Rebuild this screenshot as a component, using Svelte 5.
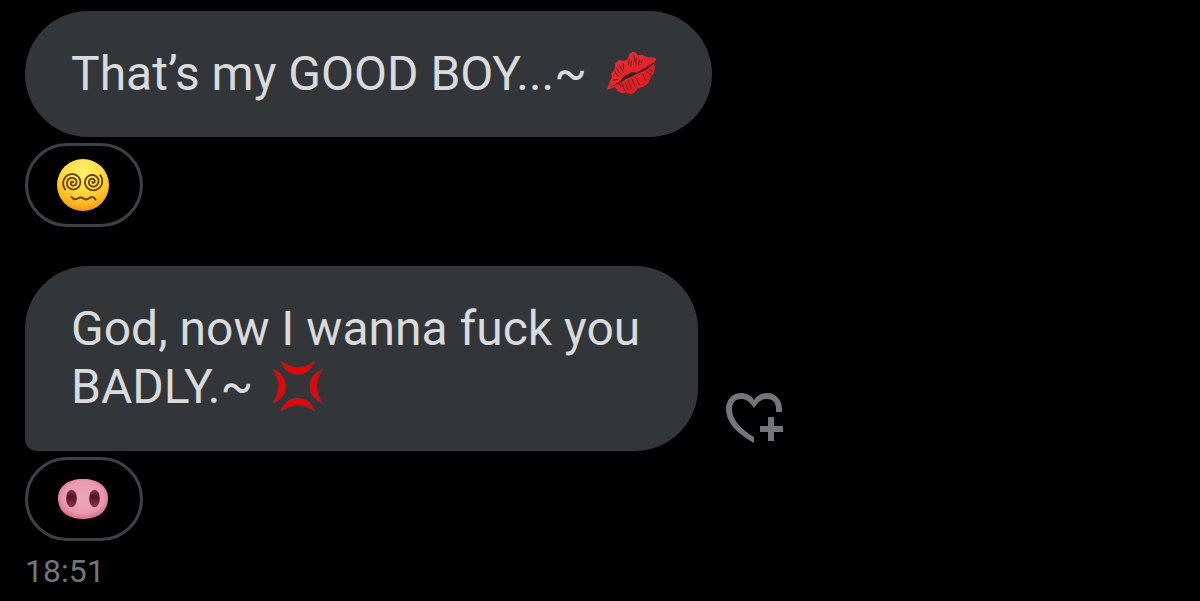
<script>
  const messages = [
    {
      text: "That’s my GOOD BOY...~",
      emoji: "kiss",
      reaction: "dizzy"
    },
    {
      text: "God, now I wanna fuck you\nBADLY.~",
      emoji: "anger",
      reaction: "pig",
      last: true
    }
  ];

  const time = "18:51";

  // spiral around cx, cy that grows from the middle outwards
  const spiral = (cx, cy, radius, turns, start) => {
    const steps = 60;
    const points = Array.from({ length: steps + 1 }, (_, i) => {
      const r = 0.5 + ((radius - 0.5) * i) / steps;
      const a = start - (turns * 2 * Math.PI * i) / steps;
      return `${(cx + r * Math.cos(a)).toFixed(1)} ${(cy + r * Math.sin(a)).toFixed(1)}`;
    });
    return "M" + points.join("L");
  };
</script>

{#snippet kiss()}
  <svg class="emoji" viewBox="24 18 156 156" role="img" aria-label="Kiss mark">
    <defs>
      <linearGradient id="lip" x1="0" y1="0" x2="1" y2="1">
        <stop offset="0" stop-color="#ea3038" />
        <stop offset="1" stop-color="#e0161d" />
      </linearGradient>
    </defs>
    <path
      fill="url(#lip)"
      d="M26 146L35 124L42 108L40 97L50 86L52 66L63 57L78 60L89 55L94 38L105 32L114 35L119 43L132 41L146 48L173 50L174 58L166 69L171 77L168 95L158 109L151 127L135 137L120 142L109 155L96 160L85 155L70 157L58 149L51 138L38 143Z"
    />
    <path
      fill="#32251f"
      d="M32 139Q52 132 67 121Q78 101 92 99L102 93L116 95Q139 84 172 61Q156 84 128 94L111 101L97 109L83 114Q61 133 32 139Z"
    />
    <path
      class="crease"
      d="M49 91L61 107M54 80L70 101M63 71L76 94M75 67L77 85M94 53L91 72M101 59L98 78M108 43L109 62M115 51L112 76M124 55L122 74M134 54L130 65M46 118L58 115M63 126L69 137M72 128L81 151M82 123L91 148M91 118L100 143M101 113L111 136M111 107L125 132M134 98L143 119M145 91L160 102M153 85L165 91"
    />
  </svg>
{/snippet}

{#snippet anger()}
  <svg class="emoji" viewBox="30 28 156 156" role="img" aria-label="Anger symbol">
    <g fill="#ea0204" stroke="#a32a28" stroke-width="2" stroke-linejoin="round">
      <path d="M57 32Q107 70 157 33Q142 71 107 71Q72 71 57 32Z" />
      <path d="M33 56Q70 70 70 107Q70 143 34 156Q68 107 33 56Z" />
      <path d="M181 57Q145 70 144 105Q144 143 180 156Q146 107 181 57Z" />
      <path d="M57 181Q69 144 107 143Q145 144 157 180Q107 144 57 181Z" />
    </g>
  </svg>
{/snippet}

{#snippet dizzy()}
  <svg class="emoji" viewBox="0 0 52 52" role="img" aria-label="Face with spiral eyes">
    <defs>
      <radialGradient id="face" cx="0.5" cy="0.25" r="0.78">
        <stop offset="0" stop-color="#fff36c" />
        <stop offset="0.5" stop-color="#ffd93a" />
        <stop offset="0.8" stop-color="#ffb51e" />
        <stop offset="1" stop-color="#f18a14" />
      </radialGradient>
    </defs>
    <circle cx="26" cy="26" r="26" fill="url(#face)" />
    <g fill="none" stroke="#654006" stroke-width="1.8" stroke-linecap="round">
      <path d={spiral(15.7, 23.7, 10, 2.5, 5.54)} />
      <path d={spiral(35.7, 22.7, 10, 2.5, 2.44)} />
      <path stroke-width="2" d="M14.5 38Q17 41.5 20.5 39.5T26.5 39.5T32.5 39T38.5 40.5" />
    </g>
  </svg>
{/snippet}

{#snippet pig()}
  <svg class="emoji" viewBox="0 0 52 52" role="img" aria-label="Pig nose">
    <defs>
      <radialGradient id="snout" cx="0.5" cy="0.45" r="0.58">
        <stop offset="0" stop-color="#f0a6bf" />
        <stop offset="0.7" stop-color="#e998b2" />
        <stop offset="1" stop-color="#d8687f" />
      </radialGradient>
      <linearGradient id="nostril" x1="0" y1="0" x2="0" y2="1">
        <stop offset="0" stop-color="#7b3245" />
        <stop offset="0.4" stop-color="#541526" />
        <stop offset="1" stop-color="#843849" />
      </linearGradient>
    </defs>
    <path
      fill="url(#snout)"
      d="M26 6C42 6 51 14 51 25C51 38 42 46 26 46C10 46 1 38 1 25C1 14 10 6 26 6Z"
    />
    <ellipse cx="14.5" cy="25.5" rx="5.3" ry="8.7" fill="url(#nostril)" />
    <ellipse cx="37.5" cy="25.5" rx="5.3" ry="8.7" fill="url(#nostril)" />
  </svg>
{/snippet}

{#snippet icon(name)}
  {#if name === "kiss"}
    {@render kiss()}
  {:else if name === "anger"}
    {@render anger()}
  {:else if name === "dizzy"}
    {@render dizzy()}
  {:else}
    {@render pig()}
  {/if}
{/snippet}

<main class="chat">
  {#each messages as message}
    <article class="message">
      <div class="row">
        <p class="bubble" class:tail={message.last}>{message.text} {@render icon(message.emoji)}</p>
        {#if message.last}
          <button class="react" aria-label="Add reaction">
            <svg viewBox="0 0 58 50" aria-hidden="true">
              <path
                fill="currentColor"
                d="M28 50C12 41 0 30 0 16C0 7 6 0 15 0C20 0 25 2 28 7C31 2 36 0 41 0C50 0 56 7 56 16V19H50V16C50 10 47 6 41 6C36 6 33 8 28 15C23 8 20 6 15 6C9 6 6 10 6 16C6 27 15 36 28 44Z"
              />
              <path fill="currentColor" d="M42 24h6v9h9v6h-9v9h-6v-9h-8v-6h8z" />
            </svg>
          </button>
        {/if}
      </div>
      <button class="reaction">{@render icon(message.reaction)}</button>
    </article>
  {/each}
  <time>{time}</time>
</main>

<style>
  :global(body) {
    margin: 0;
    background: #000;
  }

  .chat {
    display: flex;
    flex-direction: column;
    padding: 11px 25px 0;
    font-family: Roboto, "Liberation Sans", sans-serif;
    color: #d9dadc;
  }

  .message {
    margin-bottom: 39px;
  }

  .message:last-of-type {
    margin-bottom: 10px;
  }

  .row {
    display: flex;
    align-items: flex-end;
    gap: 28px;
  }

  .bubble {
    margin: 0;
    padding: 34px 58px 34px 46px;
    border-radius: 63px;
    background: #323639;
    font-size: 48px;
    line-height: 58px;
    white-space: pre-line;
  }

  .bubble.tail {
    padding-bottom: 35px;
    border-bottom-left-radius: 12px;
  }

  .emoji {
    width: 52px;
    height: 52px;
  }

  .bubble .emoji {
    margin: -10px -4px -10px 7px;
    vertical-align: 1px;
  }

  .crease {
    fill: none;
    stroke: #5b2120;
    stroke-width: 3;
  }

  button {
    padding: 0;
    border: none;
    background: none;
    cursor: pointer;
  }

  .react {
    margin-bottom: 8px;
    color: #71767b;
  }

  .react svg {
    display: block;
    width: 58px;
    height: 50px;
  }

  .reaction {
    display: flex;
    margin-top: 6px;
    padding: 13px 31px 13px 29px;
    border: 3px solid #3e4144;
    border-radius: 42px;
  }

  time {
    color: #71767b;
    font-size: 32px;
    line-height: 40px;
  }
</style>
